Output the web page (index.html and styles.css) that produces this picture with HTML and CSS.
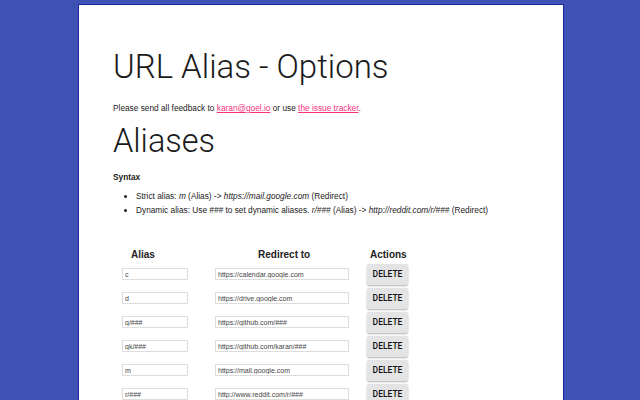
FILE: index.html
```html
<!DOCTYPE html>
<html lang="en">

<head>
    <meta charset="UTF-8">
    <title>URL Alias - Options</title>
    <link rel="stylesheet" href="styles.css">
</head>

<body>
    <div id="page">
        <h1>URL Alias - Options</h1>
        <p class="feedback">Please send all feedback to <a href="#">karan@goel.io</a> or use <a href="#">the issue tracker</a>.</p>

        <h2>Aliases</h2>
        <p class="syntax">Syntax</p>
        <ul class="rules">
            <li>Strict alias: <i>m</i> (Alias) -&gt; <i>https://mail.google.com</i> (Redirect)</li>
            <li>Dynamic alias: Use <i>###</i> to set dynamic aliases. <i>r/###</i> (Alias) -&gt; <i>http://reddit.com/r/###</i> (Redirect)</li>
        </ul>

        <table id="aliases">
            <thead>
                <tr>
                    <th class="col-alias">Alias</th>
                    <th class="col-redirect">Redirect to</th>
                    <th class="col-actions">Actions</th>
                </tr>
            </thead>
            <tbody id="alias-list">
                <!-- rows -->
            </tbody>
        </table>
    </div>

    <script>
        const aliases = [
            ['c', 'https://calendar.google.com'],
            ['d', 'https://drive.google.com'],
            ['g/###', 'https://github.com/###'],
            ['gk/###', 'https://github.com/karan/###'],
            ['m', 'https://mail.google.com'],
            ['r/###', 'http://www.reddit.com/r/###']
        ];

        const list = document.getElementById('alias-list');
        aliases.forEach(item => {
            const row = document.createElement('tr');
            row.innerHTML = `
            <td><input class="alias-input" type="text" value="${item[0]}"></td>
            <td><input class="redirect-input" type="text" value="${item[1]}"></td>
            <td><button class="delete-btn">DELETE</button></td>
        `;
            list.appendChild(row);
        });
    </script>
</body>

</html>
```

FILE: styles.css
```css
html {
    background-color: #3f51b5;
}

body {
    margin: 0;
    padding-top: 4px;
    font-family: "Liberation Sans", Arial, sans-serif;
    font-size: 8.3px;
    line-height: 10px;
    color: #222;
}

#page {
    width: 450px;
    margin-left: 78px;
    padding: 0 0 40px 34px;
    background-color: #fff;
    border: 1px solid #1a2a9c;
    border-bottom: none;
    height: 400px;
    overflow: hidden;
}

h1 {
    margin: 0;
    padding-top: 42px;
    font-family: Roboto, sans-serif;
    font-weight: 300;
    font-size: 33px;
    line-height: 40px;
    color: #1a1a1a;
}

.feedback {
    margin: 16px 0 0;
}

a {
    color: #f7307c;
}

h2 {
    margin: 8px 0 0;
    font-family: Roboto, sans-serif;
    font-weight: 300;
    font-size: 32.5px;
    line-height: 40px;
    color: #1a1a1a;
}

.syntax {
    margin: 11px 0 0;
    font-weight: bold;
}

.rules {
    margin: 9px 0 0;
    padding-left: 23px;
}

.rules li + li {
    margin-top: 4px;
}

#aliases {
    margin-top: 34px;
    border-collapse: collapse;
}

#aliases th {
    font-size: 10px;
    line-height: 12px;
    padding: 0 0 1px;
    text-align: left;
}

#aliases .col-alias {
    padding-left: 18px;
}

#aliases .col-redirect {
    padding-left: 43px;
}

#aliases .col-actions {
    padding-left: 3px;
}

#aliases td {
    padding: 0;
    height: 24px;
}

.alias-input,
.redirect-input {
    font-family: "Liberation Sans", Arial, sans-serif;
    font-size: 7px;
    height: 8px;
    padding: 1px 2px;
    border: 1px solid #ddd;
    color: #444;
    vertical-align: middle;
}

.alias-input {
    width: 60px;
    margin: 0 27px 0 9px;
}

.redirect-input {
    width: 128px;
    margin-right: 18px;
}

.delete-btn {
    font-family: Roboto, sans-serif;
    font-weight: 500;
    font-size: 8.5px;
    background-color: #e4e4e4;
    color: #111;
    border: none;
    border-radius: 2px;
    width: 41px;
    height: 21px;
    padding: 0;
    box-shadow: 0 1px 2px rgba(0, 0, 0, 0.3);
    vertical-align: middle;
    cursor: pointer;
}
```
